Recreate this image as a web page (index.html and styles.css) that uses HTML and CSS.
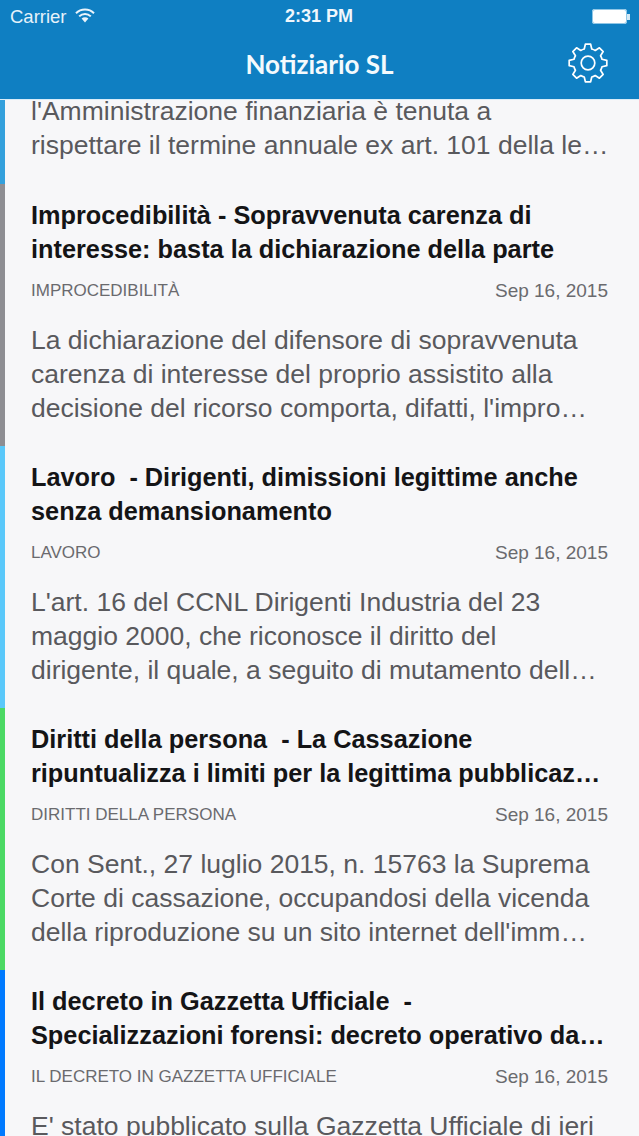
FILE: index.html
```html
<!DOCTYPE html>
<html lang="en">
<head>
    <meta charset="UTF-8">
    <meta name="viewport" content="width=device-width, initial-scale=1.0">
    <title>Notiziario SL</title>
    <link rel="stylesheet" href="styles.css">
</head>
<body>
    <div class="app">
        <header class="header">
            <div class="status">
                <div class="status-left">
                    <span>Carrier</span>
                    <svg class="wifi" width="20" height="15" viewBox="0 0 20 15">
                        <path d="M1 5.2a12.7 12.7 0 0 1 18 0" fill="none" stroke="#eaf4fb" stroke-width="2"/>
                        <path d="M4.2 8.4a8.2 8.2 0 0 1 11.6 0" fill="none" stroke="#eaf4fb" stroke-width="2"/>
                        <path d="M6.6 10.6a4.8 4.8 0 0 1 6.8 0L10 14.4z" fill="#eaf4fb"/>
                    </svg>
                </div>
                <div class="status-time">2:31 PM</div>
                <div class="battery"><div class="battery-fill"></div><div class="battery-tip"></div></div>
            </div>
            <div class="navbar">
                <h1>Notiziario SL</h1>
                <svg class="gear" width="40" height="40" viewBox="0 0 40 40" fill="none" stroke="#fff" stroke-width="1.7" stroke-linejoin="round">
                    <path d="M16.25 5.99L17.36 1.19H22.64L23.75 5.99A14.5 14.5 0 0 1 27.25 7.44L31.43 4.83L35.17 8.57L32.56 12.75A14.5 14.5 0 0 1 34.01 16.25L38.81 17.36V22.64L34.01 23.75A14.5 14.5 0 0 1 32.56 27.25L35.17 31.43L31.43 35.17L27.25 32.56A14.5 14.5 0 0 1 23.75 34.01L22.64 38.81H17.36L16.25 34.01A14.5 14.5 0 0 1 12.75 32.56L8.57 35.17L4.83 31.43L7.44 27.25A14.5 14.5 0 0 1 5.99 23.75L1.19 22.64V17.36L5.99 16.25A14.5 14.5 0 0 1 7.44 12.75L4.83 8.57L8.57 4.83L12.75 7.44A14.5 14.5 0 0 1 16.25 5.99Z"/>
                    <circle cx="20" cy="20" r="6.8"/>
                </svg>
            </div>
        </header>

        <div class="list">
            <div class="item item-partial bar-sky">
                <p class="body">
                    <span class="line">l'Amministrazione finanziaria è tenuta a</span>
                    <span class="line">rispettare il termine annuale ex art. 101 della le…</span>
                </p>
            </div>

            <div class="item bar-gray">
                <h2 class="title">
                    <span class="line">Improcedibilità - Sopravvenuta carenza di</span>
                    <span class="line">interesse: basta la dichiarazione della parte</span>
                </h2>
                <div class="meta"><span class="cat">IMPROCEDIBILITÀ</span><span class="date">Sep 16, 2015</span></div>
                <p class="body">
                    <span class="line">La dichiarazione del difensore di sopravvenuta</span>
                    <span class="line">carenza di interesse del proprio assistito alla</span>
                    <span class="line">decisione del ricorso comporta, difatti, l'impro…</span>
                </p>
            </div>

            <div class="item bar-light">
                <h2 class="title">
                    <span class="line">Lavoro&nbsp; - Dirigenti, dimissioni legittime anche</span>
                    <span class="line">senza demansionamento</span>
                </h2>
                <div class="meta"><span class="cat">LAVORO</span><span class="date">Sep 16, 2015</span></div>
                <p class="body">
                    <span class="line">L'art. 16 del CCNL Dirigenti Industria del 23</span>
                    <span class="line">maggio 2000, che riconosce il diritto del</span>
                    <span class="line">dirigente, il quale, a seguito di mutamento dell…</span>
                </p>
            </div>

            <div class="item bar-green">
                <h2 class="title">
                    <span class="line">Diritti della persona&nbsp; - La Cassazione</span>
                    <span class="line">ripuntualizza i limiti per la legittima pubblicaz…</span>
                </h2>
                <div class="meta"><span class="cat">DIRITTI DELLA PERSONA</span><span class="date">Sep 16, 2015</span></div>
                <p class="body">
                    <span class="line">Con Sent., 27 luglio 2015, n. 15763 la Suprema</span>
                    <span class="line">Corte di cassazione, occupandosi della vicenda</span>
                    <span class="line">della riproduzione su un sito internet dell'imm…</span>
                </p>
            </div>

            <div class="item bar-blue">
                <h2 class="title">
                    <span class="line">Il decreto in Gazzetta Ufficiale&nbsp; -</span>
                    <span class="line">Specializzazioni forensi: decreto operativo da…</span>
                </h2>
                <div class="meta"><span class="cat">IL DECRETO IN GAZZETTA UFFICIALE</span><span class="date">Sep 16, 2015</span></div>
                <p class="body">
                    <span class="line">E' stato pubblicato sulla Gazzetta Ufficiale di ieri</span>
                </p>
            </div>
        </div>
    </div>
</body>
</html>
```

FILE: styles.css
```css
* {
    box-sizing: border-box;
}
html, body {
    margin: 0;
    height: 100%;
}
body {
    font-family: "Liberation Sans", Arial, sans-serif;
    background-color: #f7f7f9;
}
.app {
    height: 1136px;
    overflow: hidden;
    display: flex;
    flex-direction: column;
}
.header {
    height: 99px;
    flex: none;
    background-color: #0f7fc2;
    color: #fff;
}
.status {
    height: 33px;
    padding: 0 9px 0 10px;
    display: grid;
    grid-template-columns: 1fr auto 1fr;
    align-items: center;
    font-size: 18.5px;
    color: #e6f2fa;
}
.status-left {
    display: flex;
    align-items: center;
    gap: 8px;
}
.wifi {
    margin-top: -3px;
}
.status-time {
    font-size: 18px;
    font-weight: bold;
    color: #f0f7fc;
    margin-left: -2px;
}
.battery {
    justify-self: end;
    display: flex;
    align-items: center;
}
.battery-fill {
    width: 35px;
    height: 15px;
    background: #fff;
    border-radius: 3px;
    box-shadow: 0 0 0 1px #8fc6e6 inset;
}
.battery-tip {
    width: 3px;
    height: 6px;
    background: #d5e9f5;
}
.navbar {
    height: 66px;
    display: flex;
    align-items: center;
    justify-content: center;
    position: relative;
}
.navbar h1 {
    margin: 0 0 4px;
    font-family: Lato, "Open Sans", sans-serif;
    font-size: 26px;
    font-weight: bold;
    color: #f4fafd;
}
.gear {
    position: absolute;
    right: 31px;
    top: 10px;
}

.list {
    flex: 1;
    overflow: hidden;
    border-top: 1px solid #d8ecf8;
}
.item {
    height: 262px;
    padding: 14px 31px 0 26px;
    border-left: 5px solid #8e8e93;
}
.item-partial {
    height: 90px;
    padding-top: 0;
    margin-top: -6px;
}
.bar-sky { border-left-color: #34a0dc; }
.bar-gray { border-left-color: #8e8e93; }
.bar-light { border-left-color: #5ac8fa; }
.bar-green { border-left-color: #4cd964; }
.bar-blue { border-left-color: #007aff; }

.line {
    display: block;
    white-space: nowrap;
}
.title {
    margin: 0;
    font-size: 25.3px;
    line-height: 34px;
    font-weight: bold;
    color: #141416;
}
.meta {
    margin-top: 7px;
    height: 34px;
    display: flex;
    justify-content: space-between;
    align-items: center;
    font-size: 17px;
    color: #6a6a6e;
}
.cat {
    margin-top: 1px;
}
.date {
    font-size: 19px;
    margin-top: 1px;
}
.body {
    margin: 16px 0 0;
    font-size: 26.5px;
    line-height: 34px;
    color: #59595d;
}
.item-partial .body {
    margin: 0;
}
```
